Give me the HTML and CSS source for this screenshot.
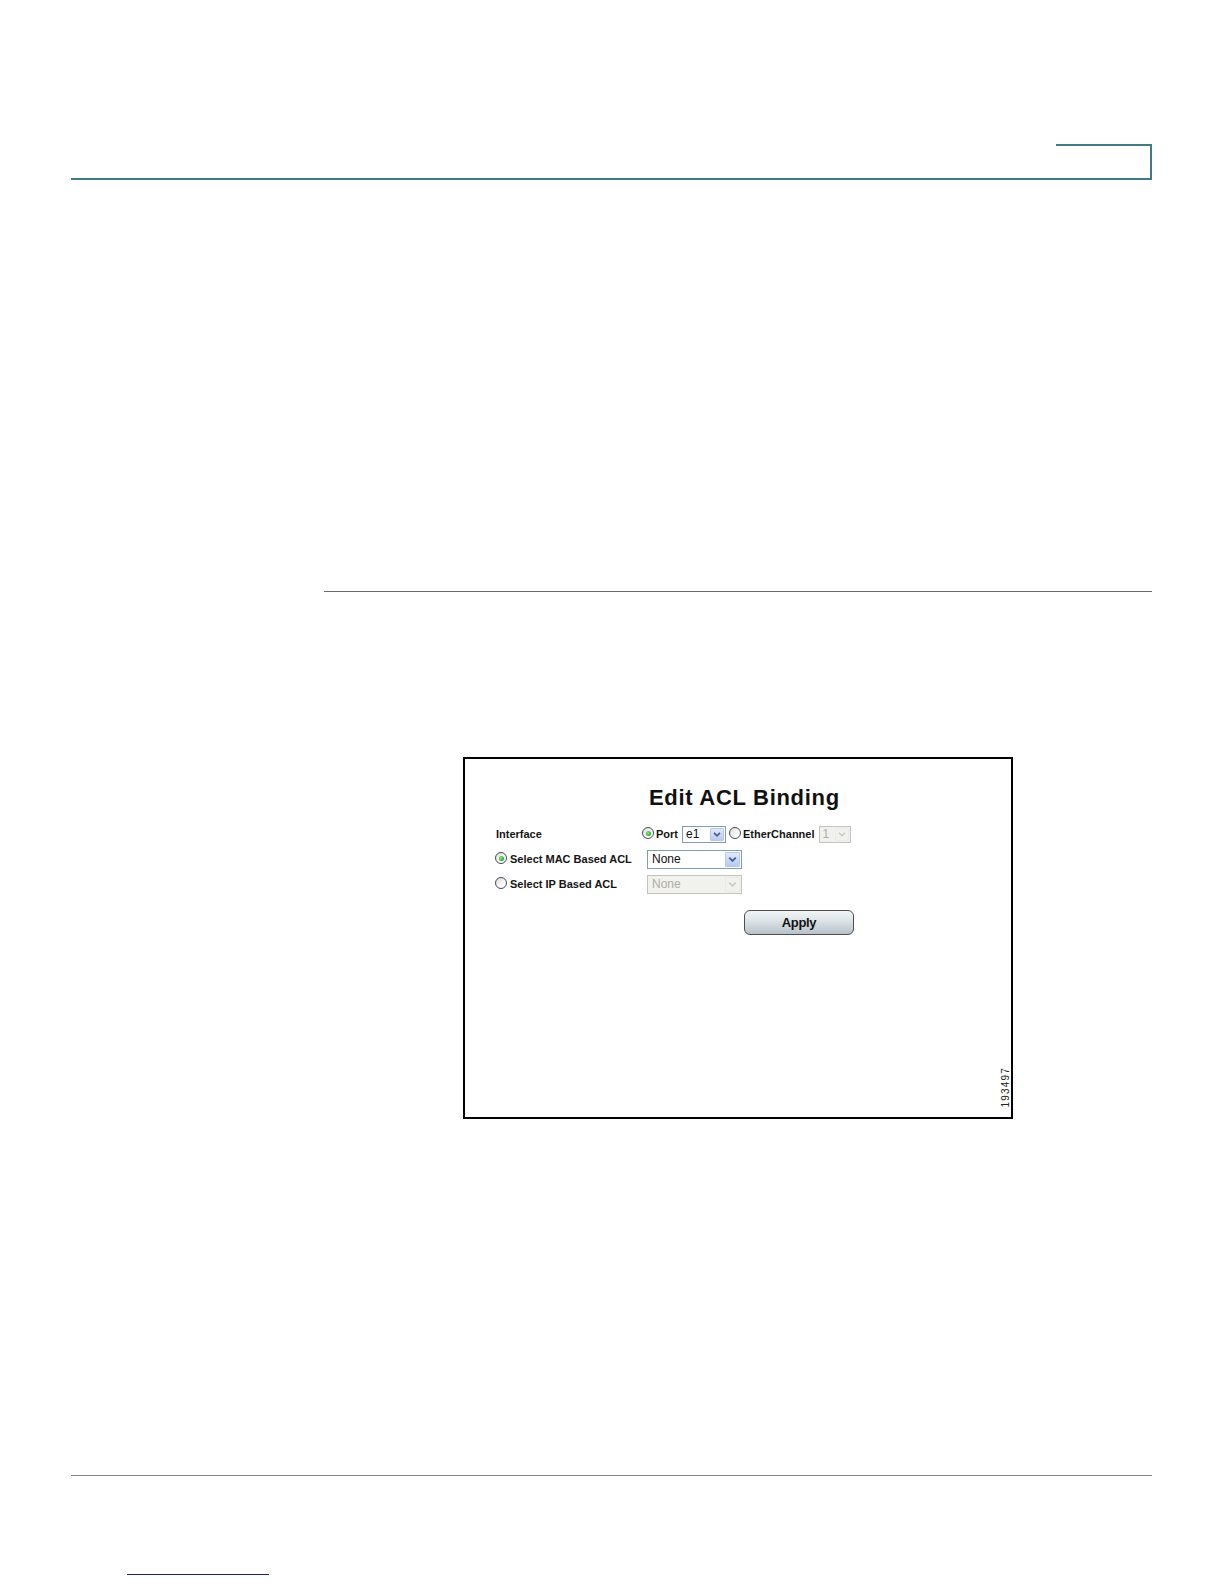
FILE: index.html
```html
<!DOCTYPE html>
<html lang="en">
<head>
<meta charset="utf-8">
<title>Edit ACL Binding</title>
<link rel="stylesheet" href="styles.css">
</head>
<body>
<div class="page">
  <header class="running-head">
    <div class="head-tab"></div>
  </header>

  <div class="section-rule"></div>

  <figure class="figure">
    <h1 class="fig-title">Edit ACL Binding</h1>
    <div class="form">
      <div class="cell label-cell"><span class="label-text plain">Interface</span></div>
      <div class="cell control-cell">
        <span class="radio checked"></span>
        <span class="label-text port-text">Port</span>
        <span class="select sel-port"><span class="sel-value">e1</span><span class="sel-btn"><svg viewBox="0 0 14 13" width="14" height="13"><path d="M3.5 4.5 L7 8 L10.5 4.5" fill="none" stroke="#4a5f8c" stroke-width="2"/></svg></span></span>
        <span class="radio"></span>
        <span class="label-text ec-text">EtherChannel</span>
        <span class="select sel-ec disabled"><span class="sel-value">1</span><span class="sel-btn"><svg viewBox="0 0 14 13" width="14" height="13"><path d="M3.5 4.5 L7 8 L10.5 4.5" fill="none" stroke="#c9c9c4" stroke-width="1.6"/></svg></span></span>
      </div>

      <div class="cell label-cell"><span class="radio checked"></span><span class="label-text">Select MAC Based ACL</span></div>
      <div class="cell control-cell">
        <span class="select sel-acl"><span class="sel-value">None</span><span class="sel-btn"><svg viewBox="0 0 14 13" width="14" height="13"><path d="M3.5 4.5 L7 8 L10.5 4.5" fill="none" stroke="#4a5f8c" stroke-width="2"/></svg></span></span>
      </div>

      <div class="cell label-cell"><span class="radio"></span><span class="label-text">Select IP Based ACL</span></div>
      <div class="cell control-cell">
        <span class="select sel-acl disabled"><span class="sel-value">None</span><span class="sel-btn"><svg viewBox="0 0 14 13" width="14" height="13"><path d="M3.5 4.5 L7 8 L10.5 4.5" fill="none" stroke="#c9c9c4" stroke-width="1.6"/></svg></span></span>
      </div>
    </div>
    <button class="apply-btn" type="button">Apply</button>
    <div class="fignum">193497</div>
  </figure>

  <div class="footer-rule"></div>
  <div class="footer-link"></div>
</div>
</body>
</html>
```

FILE: styles.css
```css
html, body {
  margin: 0;
  padding: 0;
  background: #ffffff;
}

body {
  font-family: "Liberation Sans", Arial, sans-serif;
  color: #111;
}

.page {
  width: 1224px;
  min-height: 1584px;
  display: flow-root;
}

/* running header */
.running-head {
  margin: 144px 0 0 71px;
  width: 1081px;
  height: 36px;
  box-sizing: border-box;
  border-bottom: 2px solid #3f7a86;
  display: flex;
  justify-content: flex-end;
}

.head-tab {
  width: 96px;
  height: 100%;
  box-sizing: border-box;
  border-top: 2px solid #3f7a86;
  border-right: 2px solid #3f7a86;
}

.section-rule {
  margin: 411px 0 0 324px;
  width: 828px;
  height: 0;
  border-top: 1px solid #6a6a6a;
}

/* figure */
.figure {
  margin: 165px 0 0 463px;
  width: 550px;
  height: 362px;
  box-sizing: border-box;
  border: 2px solid #000;
  display: flex;
  flex-direction: column;
  align-items: flex-start;
}

.fig-title {
  margin: 26px 0 0 184px;
  font-family: "Liberation Sans", Arial, sans-serif;
  font-size: 22px;
  line-height: 25px;
  font-weight: 700;
  letter-spacing: 0.7px;
  color: #111;
  white-space: nowrap;
}

.form {
  margin: 14px 0 0 30px;
  display: grid;
  grid-template-columns: 147px auto;
  grid-auto-rows: 20px;
  row-gap: 5px;
}

.cell {
  display: flex;
  align-items: center;
}

.label-text {
  font-size: 11px;
  font-weight: 700;
  line-height: 13px;
  color: #141414;
  white-space: nowrap;
}

.label-text.plain {
  margin-left: 1px;
}

.label-cell .radio {
  margin-right: 3px;
}

.control-cell .sel-acl {
  margin-left: 5px;
}

.port-text {
  margin: 0 4px 0 2px;
}

.ec-text {
  margin: 0 4px 0 2px;
}

.sel-port + .radio {
  margin-left: 3px;
}

/* radio */
.radio {
  width: 12px;
  height: 12px;
  box-sizing: border-box;
  border-radius: 50%;
  border: 1px solid #3f4c5e;
  background: linear-gradient(135deg, #dcdcd6 0%, #ffffff 70%);
  position: relative;
  flex: none;
  margin-top: -2px;
}

.radio.checked::after {
  content: "";
  position: absolute;
  left: 2.5px;
  top: 2.5px;
  width: 5px;
  height: 5px;
  border-radius: 50%;
  background: radial-gradient(circle at 40% 40%, #8af08a 0%, #22a622 70%);
}

/* select */
.select {
  display: inline-flex;
  align-items: center;
  justify-content: space-between;
  box-sizing: border-box;
  border: 1px solid #7f9db9;
  background: #fff;
  height: 17px;
  flex: none;
}

.sel-value {
  font-size: 12px;
  line-height: 14px;
  color: #111;
  padding-left: 3px;
}

.sel-btn {
  width: 14px;
  height: 13px;
  margin-right: 1px;
  box-sizing: border-box;
  border: 1px solid #b6c6ee;
  border-radius: 1px;
  background: linear-gradient(#e1e9fd, #b8c9f5);
  display: flex;
  align-items: center;
  justify-content: center;
}

.sel-btn svg {
  display: block;
}

.sel-port {
  width: 44px;
}

.sel-ec {
  width: 32px;
}

.sel-acl {
  width: 95px;
  height: 19px;
}

.sel-acl .sel-value {
  padding-left: 4px;
}

.sel-acl .sel-btn {
  height: 15px;
  width: 15px;
}

.select.disabled {
  border-color: #c3c3bd;
  background: #f1f1ed;
}

.select.disabled .sel-value {
  color: #aeaea6;
}

.select.disabled .sel-btn {
  border-color: #eaeae6;
  background: #f1f1ed;
}

/* apply button */
.apply-btn {
  margin: 16px 0 0 279px;
  width: 110px;
  height: 25px;
  box-sizing: border-box;
  border: 1px solid #4b4f53;
  border-radius: 6px;
  background: linear-gradient(#f2f5f6 0%, #dbe2e6 45%, #b6c1c8 100%);
  font-family: "Liberation Sans", Arial, sans-serif;
  font-size: 13px;
  font-weight: 700;
  letter-spacing: -0.3px;
  color: #111;
  padding: 0;
}

.fignum {
  margin-top: auto;
  margin-bottom: 9px;
  margin-right: 1px;
  align-self: flex-end;
  writing-mode: vertical-rl;
  transform: rotate(180deg);
  font-family: "Liberation Sans", Arial, sans-serif;
  font-size: 10px;
  line-height: 8px;
  letter-spacing: 1.2px;
  color: #222;
}

/* footer */
.footer-rule {
  margin: 356px 0 0 71px;
  width: 1081px;
  height: 0;
  border-top: 1px solid #858585;
}

.footer-link {
  margin: 98px 0 0 127px;
  width: 142px;
  height: 0;
  border-top: 1px solid #1e1e7e;
}
```
